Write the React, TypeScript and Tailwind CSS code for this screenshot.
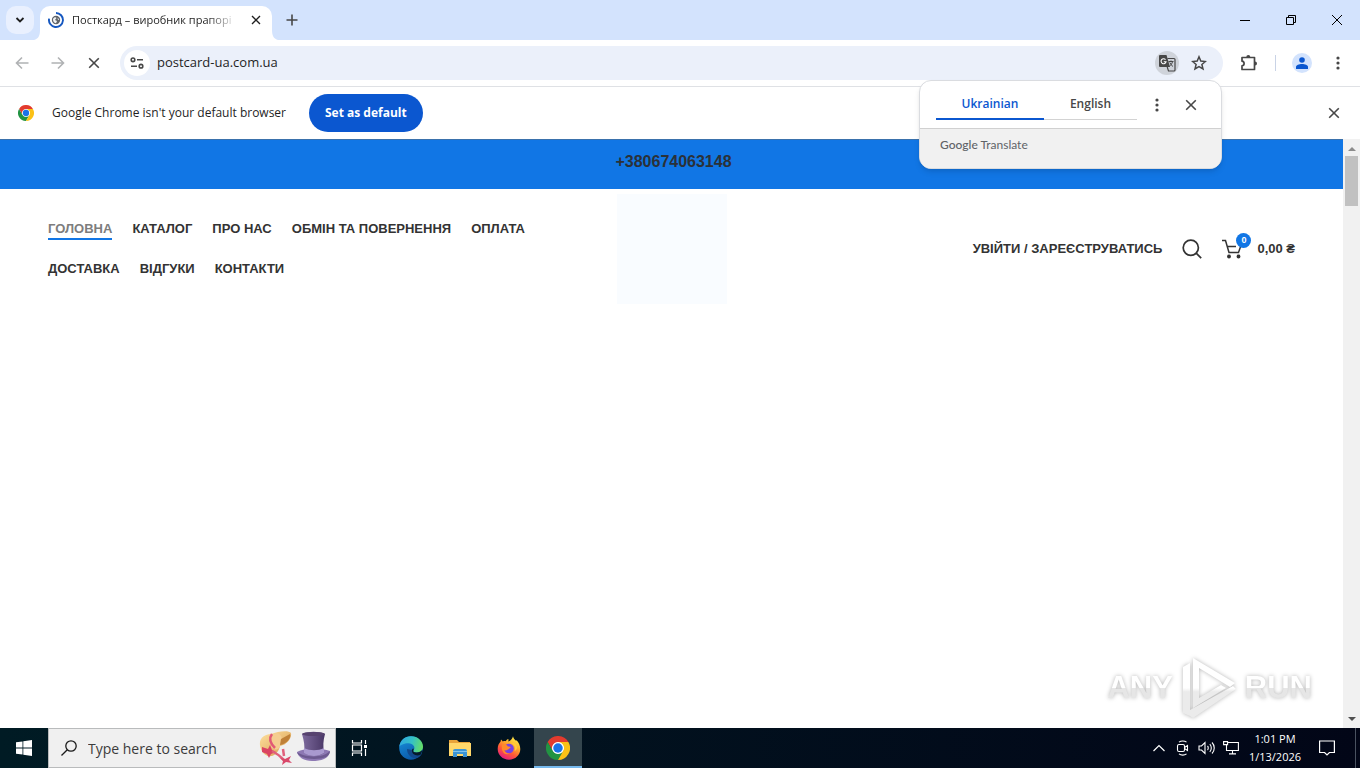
import type { ReactNode } from 'react';

interface NavItem {
    name: string;
    href: string;
    active?: boolean;
}

const navItems: NavItem[] = [
    { name: 'Головна', href: '#home', active: true },
    { name: 'Каталог', href: '#catalog' },
    { name: 'Про нас', href: '#about' },
    { name: 'Обмін та повернення', href: '#returns' },
    { name: 'Оплата', href: '#payment' },
    { name: 'Доставка', href: '#delivery' },
    { name: 'Відгуки', href: '#reviews' },
    { name: 'Контакти', href: '#contacts' }
];

function IconButton({ label, className = '', children }: { label: string; className?: string; children: ReactNode }) {
    return (
        <button type="button" aria-label={label} className={`flex shrink-0 items-center justify-center ${className}`}>
            {children}
        </button>
    );
}

function CloseIcon({ className = 'size-3' }: { className?: string }) {
    return (
        <svg viewBox="0 0 12 12" className={className} fill="none" stroke="currentColor" strokeWidth="1.6">
            <path d="M1.2 1.2l9.6 9.6M10.8 1.2l-9.6 9.6" />
        </svg>
    );
}

function DotsIcon() {
    return (
        <svg viewBox="0 0 4 14" className="h-3.5 w-1" fill="currentColor">
            <circle cx="2" cy="2" r="1.6" />
            <circle cx="2" cy="7" r="1.6" />
            <circle cx="2" cy="12" r="1.6" />
        </svg>
    );
}

function ChromeLogo({ className }: { className: string }) {
    return (
        <svg viewBox="0 0 48 48" className={className}>
            <circle cx="24" cy="24" r="13" fill="#fff" />
            <path d="M24 12h20.8A24 24 0 0 0 3.2 12l10.4 18A12 12 0 0 1 24 12z" fill="#e33b2e" />
            <path d="M3.2 12A24 24 0 0 0 24 48l10.4-18A12 12 0 0 1 13.6 30z" fill="#229342" />
            <path d="M24 48A24 24 0 0 0 44.8 12H24A12 12 0 0 1 34.4 30z" fill="#fbc116" />
            <circle cx="24" cy="24" r="9.5" fill="#1a73e8" />
        </svg>
    );
}

function TabStrip() {
    return (
        <div className="flex h-10 items-start bg-[#d3e3fd] pl-1.5">
            <IconButton label="Search tabs" className="mt-1.5 h-7 w-7 rounded-[10px] bg-[#e9f0fe] text-[#1f1f1f]">
                <svg viewBox="0 0 10 10" className="size-2.5" fill="none" stroke="currentColor" strokeWidth="1.8">
                    <path d="M1.5 3L5 6.5 8.5 3" />
                </svg>
            </IconButton>
            <svg viewBox="0 0 6 10" className="h-2.5 w-1.5 self-end" fill="#fff">
                <path d="M6 0v10H0c4-1 6-4 6-10z" />
            </svg>
            <div className="mt-1.5 flex h-[34px] w-[232px] items-center rounded-t-[10px] bg-white pr-2 pb-1.5 pl-2">
                <svg viewBox="0 0 16 16" className="size-4 shrink-0" fill="none">
                    <path d="M8 1a7 7 0 1 1-6.9 5.6" stroke="#1557c0" strokeWidth="1.9" />
                    <circle cx="8" cy="8" r="4.2" fill="#5f6368" />
                    <path d="M5 7c1-2 3-2 3.500-1L7 8l2 1-1 2.200C6 11 5 9.500 5 7zM9.500 5.500l1.700 2-1.200.5z" fill="#f1f3f4" />
                </svg>
                <span className="ml-2 bg-linear-to-r from-[#1f1f1f] from-85% to-[#1f1f1f]/20 bg-clip-text text-[11px] leading-4 whitespace-nowrap text-transparent">
                    Посткард – виробник прапорі
                </span>
                <IconButton label="Close tab" className="ml-auto size-4 text-[#1f1f1f]">
                    <CloseIcon className="size-2.5" />
                </IconButton>
            </div>
            <svg viewBox="0 0 6 10" className="h-2.5 w-1.5 self-end" fill="#fff">
                <path d="M0 0v10h6C2 9 0 6 0 0z" />
            </svg>
            <IconButton label="New tab" className="mt-1.5 h-7 w-7 text-[#474747]">
                <svg viewBox="0 0 12 12" className="size-3" fill="none" stroke="currentColor" strokeWidth="1.6">
                    <path d="M6 .5v11M.5 6h11" />
                </svg>
            </IconButton>
            <div className="ml-auto flex h-10 text-black">
                <IconButton label="Minimize" className="w-[46px]">
                    <svg viewBox="0 0 10 10" className="size-2.5" stroke="currentColor">
                        <path d="M0 5.5h10" />
                    </svg>
                </IconButton>
                <IconButton label="Restore" className="w-[46px]">
                    <svg viewBox="0 0 10 10" className="size-2.5" fill="none" stroke="currentColor">
                        <path d="M.5 2.500h7v7h-7zM2.500 2.500v-2h7v7h-2" />
                    </svg>
                </IconButton>
                <IconButton label="Close" className="w-[46px]">
                    <svg viewBox="0 0 12 12" className="size-3" fill="none" stroke="currentColor">
                        <path d="M1 1l10 10M11 1L1 11" />
                    </svg>
                </IconButton>
            </div>
        </div>
    );
}

function Toolbar() {
    return (
        <div className="flex h-[47px] items-center border-b border-[#dfe1e5] bg-white pl-2 text-[#474747]">
            <IconButton label="Back" className="size-7 text-[#b0b2b4]">
                <svg viewBox="0 0 14 14" className="size-3.5" fill="none" stroke="currentColor" strokeWidth="1.6">
                    <path d="M13.500 7H1.500M7 1.500L1.500 7 7 12.500" />
                </svg>
            </IconButton>
            <IconButton label="Forward" className="ml-2 size-7 text-[#b0b2b4]">
                <svg viewBox="0 0 14 14" className="size-3.5" fill="none" stroke="currentColor" strokeWidth="1.6">
                    <path d="M.5 7h12M7 1.500L12.500 7 7 12.500" />
                </svg>
            </IconButton>
            <IconButton label="Stop loading" className="ml-2 size-7">
                <CloseIcon />
            </IconButton>
            <div className="ml-3 flex h-[34px] min-w-0 flex-1 items-center rounded-full bg-[#ebf0fa] pr-3 pl-1">
                <IconButton label="Site information" className="size-[26px] rounded-full bg-white">
                    <svg viewBox="0 0 14 12" className="h-3 w-3.5" fill="none" stroke="currentColor" strokeWidth="1.6">
                        <circle cx="3" cy="2.800" r="1.800" />
                        <path d="M7 2.800h6M1 9.200h6" />
                        <circle cx="11" cy="9.200" r="1.800" />
                    </svg>
                </IconButton>
                <input
                    type="text"
                    aria-label="Address"
                    defaultValue="postcard-ua.com.ua"
                    className="ml-[7px] min-w-0 flex-1 bg-transparent text-[13px] text-[#1f1f1f] outline-none"
                />
                <IconButton label="Translate this page" className="size-6 rounded-full bg-[#cfd3da]">
                    <svg viewBox="0 0 18 18" className="size-[18px]">
                        <path d="M2 1h6.500l3.500 12H2a1 1 0 0 1-1-1V2a1 1 0 0 1 1-1z" fill="#474747" />
                        <path d="M9.500 4.500H16a1 1 0 0 1 1 1V16a1 1 0 0 1-1 1h-5.500l-1.300-4" fill="none" stroke="#474747" strokeWidth="1.200" />
                        <path d="M7.500 5.600A2.500 2.500 0 1 0 8 7.800H5.800" fill="none" stroke="#fff" strokeWidth="1.100" />
                        <path d="M10.500 7.500h5M13 6.500v1M14.500 7.700c-.5 2-1.600 3.500-3 4.500M11.800 8.500c.6 1.500 1.700 3 3.200 4" fill="none" stroke="#474747" />
                    </svg>
                </IconButton>
                <IconButton label="Bookmark this tab" className="ml-2 size-6">
                    <svg viewBox="0 0 16 16" className="size-4" fill="none" stroke="currentColor" strokeWidth="1.500">
                        <path d="M8 1.800l1.800 4.300 4.600.4-3.500 3 1.100 4.500L8 11.600 4 14l1.100-4.500-3.500-3 4.600-.4z" />
                    </svg>
                </IconButton>
            </div>
            <IconButton label="Extensions" className="ml-3 size-7">
                <svg viewBox="0 0 18 18" className="size-[18px]" fill="none" stroke="currentColor" strokeWidth="1.700">
                    <path d="M2 3.500h12.500v12H2v-3.700c2.800-.3 2.800-4.300 0-4.600z" strokeLinejoin="round" />
                    <path d="M6.300 3a2 2 0 0 1 4 0zM15 7.600a2 2 0 0 1 0 4z" fill="currentColor" stroke="none" />
                </svg>
            </IconButton>
            <span className="mx-3 h-4 w-px bg-[#c9d3e6]" />
            <IconButton label="Profile" className="mx-1 size-5 rounded-full bg-[#d3e3fd] text-[#0b57d0]">
                <svg viewBox="0 0 12 12" className="size-3" fill="currentColor">
                    <circle cx="6" cy="3" r="2.800" />
                    <path d="M0 12v-2c0-2 3-3 6-3s6 1 6 3v2z" />
                </svg>
            </IconButton>
            <IconButton label="Chrome menu" className="mr-2 ml-2 size-7">
                <DotsIcon />
            </IconButton>
        </div>
    );
}

function InfoBar() {
    return (
        <div className="flex h-[53px] items-center bg-white pr-5 pb-px pl-[18px] text-[#1f1f1f]">
            <ChromeLogo className="size-4" />
            <span className="ml-[18px] min-w-[241px] text-[12px]">Google Chrome isn't your default browser</span>
            <button
                type="button"
                className="ml-4 h-[38px] min-w-28 rounded-full bg-[#0b57d0] px-4 text-[12px] font-bold text-white"
            >
                Set as default
            </button>
            <IconButton label="Dismiss" className="ml-auto text-[#474747]">
                <CloseIcon />
            </IconButton>
        </div>
    );
}

function TranslateBubble() {
    return (
        <div
            role="dialog"
            aria-label="Google Translate"
            className="absolute top-20 right-[138px] z-10 w-[303px] overflow-hidden rounded-xl border border-[#dadce0] bg-white shadow-md"
        >
            <div className="flex h-12 items-center border-b border-[#d0d0d0] px-4 text-[12px] font-semibold text-[#474747]">
                <div role="tablist" className="flex h-[30px] flex-1">
                    <button type="button" role="tab" aria-selected="true" className="w-[108px] border-b-2 border-[#0b57d0] text-[#0b57d0]">
                        Ukrainian
                    </button>
                    <button type="button" role="tab" aria-selected="false" className="flex-1 border-b border-[#d3d3d3]">
                        English
                    </button>
                </div>
                <IconButton label="Translate options" className="ml-1.5 size-7">
                    <DotsIcon />
                </IconButton>
                <IconButton label="Close translate" className="ml-1.5 size-7">
                    <CloseIcon />
                </IconButton>
            </div>
            <div className="h-[39px] bg-[#f1f1f1] px-5 pt-2 font-['Lato',sans-serif] text-[12px] leading-4 text-[#5f6368]">
                <span className="font-medium">Google</span> Translate
            </div>
        </div>
    );
}

function ShopHeader() {
    return (
        <header className="font-['Liberation_Sans',Arial,sans-serif] font-bold text-[#333]">
            <div className="flex h-[50px] justify-center border-t border-[#3a71ac] bg-[#1176e5] pt-2.5">
                <a href="tel:+380674063148" className="pl-1 text-[16px] leading-6 text-[#2b3138]">
                    +380674063148
                </a>
            </div>
            <div className="grid grid-cols-[1fr_110px_1fr] items-center px-12 py-[5px] text-[13px]">
                <nav aria-label="Головне меню" className="flex flex-wrap gap-x-5 pr-4 uppercase">
                    {navItems.map((item) => (
                        <a key={item.href} href={item.href} className="flex h-10 items-center">
                            {item.active ? (
                                <span className="border-b-2 border-[#1176e5] pt-0.5 leading-[18px] text-[#7d7d7d]">{item.name}</span>
                            ) : (
                                item.name
                            )}
                        </a>
                    ))}
                </nav>
                <a href="#home" aria-label="Посткард" className="size-[110px] bg-[#f9fcff]" />
                <div className="flex items-center justify-end">
                    <a href="#login" className="uppercase">
                        Увійти / Зареєструватись
                    </a>
                    <IconButton label="Пошук" className="ml-5">
                        <svg viewBox="0 0 20 20" className="size-5" fill="none" stroke="currentColor" strokeWidth="1.700">
                            <circle cx="8.800" cy="8.800" r="7.600" />
                            <path d="M14.200 14.200l5 5" />
                        </svg>
                    </IconButton>
                    <a href="#cart" className="ml-5 flex items-center">
                        <span className="relative">
                            <svg viewBox="0 0 20 20" className="size-5" fill="none" stroke="currentColor" strokeWidth="1.500">
                                <path d="M0 1.500h3.500L7 13.500h9.500L19.500 5M5 7.500h9" />
                                <circle cx="7" cy="17.500" r="1.200" fill="currentColor" />
                                <circle cx="16.500" cy="17.500" r="1.200" fill="currentColor" />
                            </svg>
                            <span className="absolute -top-1.5 left-3.5 flex size-[15px] items-center justify-center rounded-full bg-[#1176e5] text-[9px] text-white">
                                0
                            </span>
                        </span>
                        <span className="ml-[15px]">0,00 ₴</span>
                    </a>
                </div>
            </div>
        </header>
    );
}

function PageScrollbar() {
    return (
        <div className="flex w-[17px] flex-col items-center justify-between bg-[#f1f1f1] pt-[7px] pb-1.5">
            <div className="flex flex-col items-center gap-[5px]">
                <svg viewBox="0 0 8 5" className="h-[5px] w-2" fill="#8b8b8b">
                    <path d="M0 5l4-4 4 4z" />
                </svg>
                <div className="h-[50px] w-[13px] bg-[#c1c1c1]" />
            </div>
            <svg viewBox="0 0 8 5" className="h-[5px] w-2" fill="#505050">
                <path d="M0 0l4 4 4-4z" />
            </svg>
        </div>
    );
}

function Watermark() {
    return (
        <div
            aria-hidden="true"
            className="absolute right-8 bottom-2 flex items-center gap-2 font-['Liberation_Sans',Arial,sans-serif] text-[31px] leading-10 font-bold drop-shadow-[0_0_2px_#b5b5b5]"
        >
            <span className="bg-linear-to-b from-white from-50% to-[#e6e6e6] to-50% bg-clip-text text-transparent">ANY</span>
            <svg viewBox="0 0 56 64" className="h-16 w-14">
                <defs>
                    <linearGradient id="mark" x1="0" y1="0" x2="0" y2="64" gradientUnits="userSpaceOnUse">
                        <stop offset="0.500" stopColor="#fff" />
                        <stop offset="0.560" stopColor="#ebebeb" />
                    </linearGradient>
                </defs>
                <path
                    d="M12 2l42 25-5 4-31-19v30l22-13 5 3-33 20zM2 11l7-4v47l43-24 3 3-43 29-3-2-7-3z"
                    fill="url(#mark)"
                />
            </svg>
            <span className="bg-linear-to-b from-white from-50% to-[#e6e6e6] to-50% bg-clip-text text-transparent">RUN</span>
        </div>
    );
}

function HatsArt() {
    return (
        <svg viewBox="0 0 72 34" className="h-[34px] w-[72px] shrink-0">
            <defs>
                <linearGradient id="straw" x1="0" y1="0" x2="1" y2="1">
                    <stop offset="0" stopColor="#ffe2a0" />
                    <stop offset="1" stopColor="#d79b4f" />
                </linearGradient>
                <linearGradient id="topHat">
                    <stop offset="0" stopColor="#7d6a9d" />
                    <stop offset="1" stopColor="#493766" />
                </linearGradient>
            </defs>
            <path d="M1 14C0 7 6 3 12 3c7-3 18-4 20-1 1 5-4 12-11 13-1 4-3 8-8 10C6 26 2 21 1 14z" fill="url(#straw)" />
            <path d="M12 5c5-4 10-3 11 3l-2 8c-3 4-8 3-9-1z" fill="#f5cd90" />
            <path d="M22 8l9-5c2 4-4 10-10 11z" fill="#bf8038" />
            <path d="M13 3c-3 4-2 9 3 14" fill="none" stroke="#e25a75" strokeWidth="2.500" />
            <path d="M3 16l6 2 2-4 2 5 4 2-5 2-2 4-2-4-5-2z" fill="#db4463" />
            <path d="M13 20c4 2 8 5 12 9M24 18l1 7" fill="none" stroke="#e0607b" strokeWidth="2.500" />
            <path d="M21 27l5 1 6-3-2 4 3 3-6-1-4 3 1-4z" fill="#d9486a" />
            <path d="M38 21c7-4 24-4 33-1-1 8-9 10-18 10-8 0-14-4-15-9z" fill="#8d78b3" />
            <path d="M38 21c6 5 25 7 33-1 0 5-5 8-16 8-10 0-16-3-17-7z" fill="#6d5a90" />
            <path d="M43 3c6-3 17-3 23 0-2 7-2 12-1 19-6 4-14 4-20 0 1-7 0-12-2-19z" fill="url(#topHat)" />
            <path d="M45 17c6 3 14 3 20 0v5c-6 4-14 4-20 0z" fill="#a999cf" />
            <ellipse cx="54.500" cy="3" rx="11.500" ry="2" fill="#57436f" />
        </svg>
    );
}

function EdgeLogo() {
    return (
        <svg viewBox="0 0 24 24" className="size-6">
            <defs>
                <linearGradient id="edgeTop" x1="0" y1="0.400" x2="1" y2="0.600">
                    <stop offset="0" stopColor="#2fa8e0" />
                    <stop offset="0.500" stopColor="#35c1c5" />
                    <stop offset="1" stopColor="#66df63" />
                </linearGradient>
                <linearGradient id="edgeBody" x1="0" y1="0" x2="0.500" y2="1">
                    <stop offset="0" stopColor="#1a94e0" />
                    <stop offset="1" stopColor="#0a59a8" />
                </linearGradient>
            </defs>
            <circle cx="12" cy="12" r="11.800" fill="url(#edgeBody)" />
            <path d="M8 13c0 6 5 10 10 9 3-1 5-4 5-5-4 3-10 1-10-3z" fill="#12498c" />
            <path d="M.3 11C1 4 6 .2 12 .2c7 0 12 5 12 10.300 0 4-3 6-6.500 6-3 0-3.800-1.300-3-2.300 2.500-3-.5-7-5-7C5 7.200 1 9 .3 11z" fill="url(#edgeTop)" />
            <path d="M14.500 14.200c-.8 1 0 2.300 3 2.300 2.500 0 4.500-1 5.700-2.500-.2 2-.8 3.300-1.700 4.700-4 2-9-.5-8.500-4.500.2-1 .7-1.500 1.200-2 .5.700.6 1.300.3 2z" fill="#061b29" />
        </svg>
    );
}

function FolderIcon() {
    return (
        <svg viewBox="0 0 22 18" className="h-[18px] w-[22px]">
            <path d="M0 1h8l2 2h11v14H0z" fill="#e8a33a" />
            <path d="M0 4h22v13H0z" fill="#ffd76a" />
            <path d="M4 18v-6a2 2 0 0 1 2-2h10a2 2 0 0 1 2 2v6h-4v-3H8v3z" fill="#3c94d4" />
            <path d="M4 12.500h14" stroke="#81c4ee" />
        </svg>
    );
}

function FirefoxLogo() {
    return (
        <svg viewBox="0 0 24 24" className="size-6">
            <defs>
                <linearGradient id="fox" x1="0.800" y1="0" x2="0.250" y2="1">
                    <stop offset="0" stopColor="#fff44f" />
                    <stop offset="0.350" stopColor="#ffb12b" />
                    <stop offset="0.650" stopColor="#ff5a36" />
                    <stop offset="1" stopColor="#e31587" />
                </linearGradient>
            </defs>
            <path d="M16 .3c.3 2 1.500 3 3 4.500l.6-.6c2 2.200 3.700 5 3.700 8.800 0 6-5 10.700-11.300 10.700S.7 19 .7 13c0-3 1-5.500 2.800-7.200L4 3.500c.8.700 1.400 1.400 1.700 2C7 5 8 5 8.800 5.200c.5-1 1.500-1.800 2.600-2.200l.1 2.600C13.500 4.600 15.500 3 16 .3z" fill="url(#fox)" />
            <circle cx="12" cy="12.500" r="4.800" fill="#7542e5" />
            <path d="M5 9c3-1 5 0 6 1.600 1.500 0 2.600.2 2.600 1-.7 1-2 1.300-2.700 2-.8 1-2.600 1-3.600.4.500 2.500 3 3.800 5.500 3.400-4.500 2.600-9-1.400-7.800-8.400z" fill="#ff8a2b" />
            <path d="M13 7c4 .4 6 4 4.600 8 1.500-.8 2.300-2 2.500-3.600C19.500 8 17 6 13 7z" fill="#ffcb3d" />
        </svg>
    );
}

function Taskbar() {
    return (
        <footer className="flex h-10 shrink-0 items-stretch bg-linear-to-r from-[#001b24] to-[#020617] text-white">
            <IconButton label="Start" className="w-12">
                <svg viewBox="0 0 16 16" className="size-4" fill="currentColor">
                    <path d="M0 2.300L6.500 1.400v6.200H0zM7.300 1.300L16 0v7.600H7.300zM0 8.400h6.500v6.200L0 13.700zM7.300 8.400H16V16l-8.700-1.300z" />
                </svg>
            </IconButton>
            <label className="flex w-72 items-center border border-[#b9bbbc] bg-[#f0f0f0] pr-1 pl-3 text-[#1b1b1b]">
                <svg viewBox="0 0 16 16" className="size-4 shrink-0" fill="none" stroke="currentColor" strokeWidth="1.300">
                    <circle cx="10" cy="6" r="5.200" />
                    <path d="M6.300 9.700L.5 15.500" />
                </svg>
                <input
                    type="search"
                    aria-label="Type here to search"
                    placeholder="Type here to search"
                    className="ml-[11px] min-w-0 flex-1 bg-transparent text-[14px] outline-none placeholder:text-[#3c3c3c]"
                />
                <HatsArt />
            </label>
            <IconButton label="Task View" className="w-12">
                <svg viewBox="0 0 18 16" className="h-4 w-[18px]" fill="none" stroke="currentColor" strokeWidth="1.200">
                    <path d="M1.500 0v3h9V0M1.500 16v-3h9v3M1.500 5h9v6h-9zM14.500 0v4M14.500 9v7" />
                    <path d="M13 5h3v3h-3z" fill="currentColor" stroke="none" />
                </svg>
            </IconButton>
            <IconButton label="Microsoft Edge" className="ml-[3px] w-12">
                <EdgeLogo />
            </IconButton>
            <IconButton label="File Explorer" className="ml-px w-12">
                <FolderIcon />
            </IconButton>
            <IconButton label="Firefox" className="ml-px w-12">
                <FirefoxLogo />
            </IconButton>
            <IconButton label="Google Chrome" className="ml-px w-12 border-b-2 border-[#76b9ed] bg-[#34454d] pt-0.5">
                <ChromeLogo className="size-6" />
            </IconButton>
            <div className="ml-auto flex items-center">
                <IconButton label="Show hidden icons" className="w-6">
                    <svg viewBox="0 0 12 8" className="h-2 w-3" fill="none" stroke="currentColor" strokeWidth="1.200">
                        <path d="M.5 7L6 1.500 11.500 7" />
                    </svg>
                </IconButton>
                <IconButton label="Meet Now" className="w-6">
                    <svg viewBox="0 0 16 16" className="size-4" fill="none" stroke="currentColor" strokeWidth="1.100">
                        <rect x="2.500" y="4.500" width="7" height="7" rx="1.500" />
                        <path d="M9.500 7.500l3-2v5l-3-2M4 2.200C6 .5 9.500.5 11.500 2.200M4 13.800c2 1.700 5.500 1.700 7.500 0" />
                    </svg>
                </IconButton>
                <IconButton label="Volume" className="w-6">
                    <svg viewBox="0 0 18 14" className="h-3.5 w-[18px]" fill="none" stroke="currentColor" strokeWidth="1.100">
                        <path d="M1 5h2.500L7 1.500v11L3.500 9H1zM9.500 5c1 1 1 3 0 4M11.800 3.200c2 2 2 5.600 0 7.600M14 1.500c3 3 3 8 0 11" />
                    </svg>
                </IconButton>
                <IconButton label="Network" className="w-6">
                    <svg viewBox="0 0 16 14" className="h-3.5 w-4" fill="none" stroke="currentColor" strokeWidth="1.100">
                        <path d="M5 1.500h10.400v8H3.500V5M.6.600h4v3h-4zM3.500 5V3.600M9.500 9.500v3M6 12.900h7" />
                    </svg>
                </IconButton>
                <button type="button" className="w-16 text-center text-[11px] leading-[18px]">
                    1:01 PM
                    <br />
                    1/13/2026
                </button>
                <IconButton label="Notifications" className="w-10">
                    <svg viewBox="0 0 16 16" className="size-4" fill="none" stroke="currentColor" strokeWidth="1.200">
                        <path d="M.6 1h14.800v11.500h-5L8 15l-2.400-2.500h-5z" />
                    </svg>
                </IconButton>
                <span className="ml-2 h-10 w-[5px] border-l border-[#4a5260]" />
            </div>
        </footer>
    );
}

export default function App() {
    return (
        <div className="relative flex min-h-screen flex-col bg-white font-['Open_Sans',sans-serif]">
            {/* Browser chrome */}
            <TabStrip />
            <Toolbar />
            <InfoBar />
            <TranslateBubble />

            {/* Page content */}
            <div className="relative -mt-px flex flex-1">
                <main className="min-w-0 flex-1 bg-white">
                    <ShopHeader />
                </main>
                <PageScrollbar />
                <div className="absolute right-4 bottom-0">
                    <Watermark />
                </div>
            </div>

            <Taskbar />
        </div>
    );
}
